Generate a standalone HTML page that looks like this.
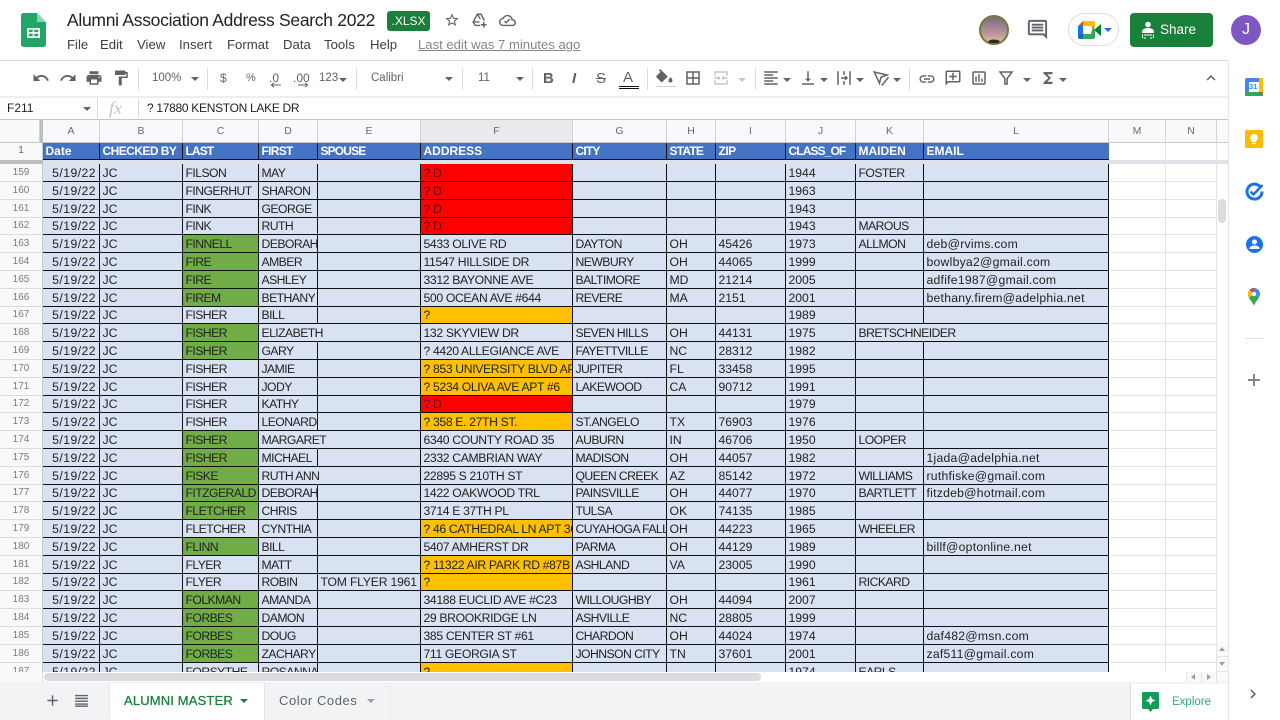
<!DOCTYPE html>
<html><head><meta charset="utf-8"><title>Alumni Association Address Search 2022</title>
<style>
html,body{margin:0;padding:0;width:1280px;height:720px;overflow:hidden;background:#fff;font-family:"Liberation Sans",sans-serif;color:#222}
body{filter:blur(.3px)}
.x{position:absolute;white-space:nowrap}
svg{position:absolute;display:block}
.i{fill:#5f6368}
.k{position:absolute;width:0;height:0;border-left:4px solid transparent;border-right:4px solid transparent;border-top:4px solid #5f6368}
.sp{position:absolute;top:68px;height:22px;width:1px;background:#dadce0}
.m{position:absolute;top:37px;font-size:13.2px;color:#3c4043;line-height:15px}
.t{position:absolute;top:71px;font-size:12px;color:#5f6368;line-height:14px;white-space:nowrap}
#grid{position:absolute;left:0;top:164px;width:1217px;height:508px;overflow:hidden}
table{border-collapse:separate;border-spacing:0;table-layout:fixed;width:1217px;position:absolute;left:0;top:0}
td{box-sizing:border-box;height:18px;padding:0 0 0 2.5px;background:#d9e2f3;border-right:1px solid #111;border-bottom:1px solid #111;font-size:12.2px;line-height:14px;white-space:nowrap;overflow:hidden;color:#222;letter-spacing:-.55px}
tr.s td{height:17px}
td:nth-child(2){letter-spacing:.45px}
td:nth-child(3){letter-spacing:0}
td:nth-child(6){letter-spacing:-.2px}
td:nth-child(7){letter-spacing:-.35px}
td:nth-child(9),td:nth-child(10),td:nth-child(11){letter-spacing:0}
td:nth-child(13){letter-spacing:.25px}
td.h{background:#f8f9fa;border-right:1px solid #c8c8c8;border-bottom:1px solid #dcdcdc;text-align:center;font-size:10px;color:#7b7b7b;padding:0;letter-spacing:0}
td.d{text-align:right;padding:0 3px 0 0}
td.w{background:#fff;border-right:1px solid #e2e3e3;border-bottom:1px solid #e2e3e3;padding:0}
td.g{background:#70ad47}
td.r{background:#f00;color:#600}
td.a{background:#ffc000}
td.o{overflow:visible;border-right-color:transparent}
.c{position:absolute;top:120px;height:23px;box-sizing:border-box;background:#f8f9fa;border-right:1px solid #d4d4d4;text-align:center;font-size:10.5px;line-height:23px;color:#6a6a6a;border-bottom:1px solid #c8c8c8}
.b{position:absolute;top:143px;height:17px;box-sizing:border-box;background:#4472c4;border-right:1px solid #111;border-bottom:1px solid #111;color:#fff;font-weight:bold;font-size:12px;line-height:16px;padding-left:2.5px;white-space:nowrap;overflow:hidden}
.v{position:absolute;width:1px;background:#e2e3e3}
</style></head><body>

<!-- Title area -->
<svg style="left:21px;top:13px" width="25" height="34" viewBox="0 0 25 34"><path d="M2.5 0H16l9 9v22.5a2.5 2.5 0 0 1-2.5 2.5h-20A2.5 2.5 0 0 1 0 31.500v-29A2.500 2.500 0 0 1 2.500 0z" fill="#23a566"/><path d="M16 0l9 9h-9z" fill="#8ed1b1"/><path d="M6 15h13v10H6zm1.800 1.800v2.300h3.900v-2.300zm5.500 0v2.300h3.900v-2.300zm-5.500 3.900v2.500h3.900v-2.500zm5.500 0v2.500h3.900v-2.500z" fill="#fff" fill-rule="evenodd"/></svg>
<div class="x" style="left:67px;top:10px;font-size:17.5px;line-height:21px;color:#202124;letter-spacing:-.29px">Alumni Association Address Search 2022</div>
<div class="x" style="left:387px;top:11px;width:43px;height:20px;background:#188038;border-radius:3px;color:#fff;font-size:12px;line-height:21px;text-align:center">.XLSX</div>
<svg style="left:444px;top:12px" width="16" height="16" viewBox="0 0 24 24"><path class="i" d="M22 9.240l-7.190-.62L12 2 9.190 8.630 2 9.240l5.460 4.730L5.820 21 12 17.270 18.180 21l-1.630-7.030L22 9.240zM12 15.400l-3.760 2.270 1-4.280-3.320-2.880 4.380-.38L12 6.100l1.710 4.040 4.380.38-3.320 2.880 1 4.280L12 15.400z"/></svg>
<svg style="left:471px;top:12px" width="17" height="17" viewBox="0 0 24 24" fill="none" stroke="#5f6368" stroke-width="2"><path d="M9 3h5l5 9M9 3L3 14l3 5h7M9 3l4 7M3 14h9"/><path d="M18 14v8M14 18h8" stroke="#5f6368"/></svg>
<svg style="left:499px;top:12px" width="17" height="17" viewBox="0 0 24 24"><path class="i" d="M19.350 10.040A7.490 7.490 0 0 0 12 4C9.110 4 6.600 5.640 5.350 8.040A5.994 5.994 0 0 0 0 14c0 3.310 2.690 6 6 6h13c2.760 0 5-2.240 5-5 0-2.640-2.050-4.780-4.650-4.960zM19 18H6c-2.210 0-4-1.790-4-4s1.790-4 4-4h.71C7.370 7.690 9.480 6 12 6a5.500 5.500 0 0 1 5.500 5.500v.5H19a3 3 0 0 1 0 6zm-9-1.500l-3-3 1.400-1.400 1.600 1.600 4.600-4.600 1.400 1.400z"/></svg>
<div class="m" style="left:67px">File</div><div class="m" style="left:100px">Edit</div><div class="m" style="left:137px">View</div><div class="m" style="left:179px">Insert</div><div class="m" style="left:227px">Format</div><div class="m" style="left:283px">Data</div><div class="m" style="left:324px">Tools</div><div class="m" style="left:370px">Help</div>
<div class="m" style="left:418px;color:#80868b;text-decoration:underline;font-size:13.1px">Last edit was 7 minutes ago</div>

<!-- Top right -->
<svg style="left:979px;top:15px" width="30" height="30" viewBox="0 0 30 30"><defs><linearGradient id="av" x1="0" y1="0" x2="0" y2="1"><stop offset="0" stop-color="#766a7a"/><stop offset=".55" stop-color="#b08e99"/><stop offset=".9" stop-color="#e5b09a"/></linearGradient></defs><circle cx="15" cy="15" r="14" fill="url(#av)" stroke="#6c7d3c" stroke-width="2"/><path d="M9 26q6-3 12 0l-2 2h-8z" fill="#2b2622"/></svg>
<svg style="left:1026px;top:18px" width="23" height="23" viewBox="0 0 24 24"><path class="i" d="M21.990 4c0-1.100-.89-2-1.990-2H4c-1.100 0-2 .9-2 2v12c0 1.100.9 2 2 2h14l4 4-.01-18zM20 4v13.170L18.830 16H4V4h16zM6 12h12v2H6zm0-3h12v2H6zm0-3h12v2H6z"/></svg>
<div class="x" style="left:1068px;top:13px;width:51px;height:33px;box-sizing:border-box;border:1px solid #dadce0;border-radius:17px"></div>
<svg style="left:1078px;top:21px" width="24" height="18" viewBox="0 0 24 18"><path d="M5 0h10v5H5z" fill="#fbbc04"/><path d="M5 0v5H0z" fill="#ea4335"/><path d="M0 5h5v8H0z" fill="#1a73e8"/><path d="M0 13h5v5H2a2 2 0 0 1-2-2z" fill="#1967d2"/><path d="M5 13h10v5H5z" fill="#34a853"/><path d="M15 0a2 2 0 0 1 2 2v4l-2 3-2-4V3z" fill="#fbbc04"/><path d="M15 5l2 4v7a2 2 0 0 1-2 2v-5h-2z" fill="#34a853"/><path d="M16 9l7-6v12z" fill="#00832d"/></svg>
<div class="k" style="left:1104px;top:28px;border-top-color:#1a73e8"></div>
<div class="x" style="left:1130px;top:13px;width:83px;height:34px;background:#188038;border-radius:4px"></div>
<svg style="left:1140px;top:21px" width="16" height="18" viewBox="0 0 16 18"><circle cx="8" cy="3.500" r="2.800" fill="#fff"/><path d="M2 11c0-3 3-4 6-4s6 1 6 4v1H2z" fill="#fff"/><path d="M4 14h8M3 16.500a2 2 0 0 1 0-3M6 17H3.500M10 17h2.500M13 13.500a2 2 0 0 1 0 3" stroke="#fff" fill="none" stroke-width="1"/></svg>
<div class="x" style="left:1160px;top:22px;color:#fff;font-size:13.500px;line-height:16px">Share</div>
<div class="x" style="left:1231px;top:15px;width:30px;height:30px;border-radius:50%;background:#7e57c2;color:#fff;font-size:16px;line-height:30px;text-align:center">J</div>

<!-- Toolbar -->
<div class="x" style="left:0;top:60px;width:1228px;height:1px;background:#dadce0"></div>
<div class="x" style="left:0;top:96px;width:1228px;height:2px;background:#eceef0"></div>
<svg style="left:32px;top:69px" width="18" height="18" viewBox="0 0 24 24"><path class="i" d="M12.500 8c-2.650 0-5.050.99-6.900 2.600L2 7v9h9l-3.620-3.620c1.390-1.160 3.160-1.880 5.120-1.880 3.540 0 6.550 2.310 7.600 5.500l2.370-.78C21.080 11.030 17.150 8 12.500 8z"/></svg>
<svg style="left:59px;top:69px" width="18" height="18" viewBox="0 0 24 24"><path class="i" d="M18.400 10.600C16.550 8.990 14.150 8 11.500 8c-4.650 0-8.580 3.030-9.960 7.220L3.900 16c1.050-3.190 4.050-5.500 7.600-5.500 1.950 0 3.730.72 5.120 1.880L13 16h9V7l-3.600 3.600z"/></svg>
<svg style="left:85px;top:69px" width="18" height="18" viewBox="0 0 24 24"><path class="i" d="M19 8H5c-1.660 0-3 1.340-3 3v6h4v4h12v-4h4v-6c0-1.660-1.340-3-3-3zm-3 11H8v-5h8v5zm3-7c-.55 0-1-.45-1-1s.45-1 1-1 1 .45 1 1-.45 1-1 1zm-1-9H6v4h12V3z"/></svg>
<svg style="left:112px;top:69px" width="18" height="18" viewBox="0 0 24 24"><path class="i" d="M18 4V3c0-.55-.45-1-1-1H5c-.55 0-1 .45-1 1v4c0 .55.45 1 1 1h12c.55 0 1-.45 1-1V6h1v4H9v11c0 .55.45 1 1 1h2c.55 0 1-.45 1-1v-9h8V4h-3z"/></svg>
<div class="sp" style="left:138px"></div>
<div class="t" style="left:152px;font-size:11.500px">100%</div><div class="k" style="left:191px;top:77px"></div>
<div class="sp" style="left:207px"></div>
<div class="t" style="left:220px">$</div><div class="t" style="left:246px;font-size:11px">%</div>
<div class="t" style="left:269px">.0</div><div class="t" style="left:293px">.00</div>
<svg style="left:268px;top:82px" width="44" height="6" viewBox="0 0 44 6" fill="none" stroke="#5f6368" stroke-width="1"><path d="M13 3H4M6 .800L3.500 3 6 5.200M30 3h9M37 .800L39.500 3 37 5.200"/></svg>
<div class="t" style="left:319px;font-size:11.500px">123</div><div class="k" style="left:339px;top:78px"></div>
<div class="sp" style="left:356px"></div>
<div class="t" style="left:371px;font-size:11.500px">Calibri</div><div class="k" style="left:445px;top:77px"></div>
<div class="sp" style="left:462px"></div>
<div class="t" style="left:478px;font-size:11.500px">11</div><div class="k" style="left:516px;top:77px"></div>
<div class="sp" style="left:532px"></div>
<div class="t" style="left:543px;top:70px;font-size:15px;line-height:18px;font-weight:bold">B</div>
<div class="t" style="left:572px;top:70px;font-size:15px;line-height:18px;font-weight:bold;font-style:italic">I</div>
<div class="t" style="left:596px;top:70px;font-size:15px;line-height:18px;text-decoration:line-through">S</div>
<div class="t" style="left:623px;top:69px;font-size:15px;line-height:17px">A</div>
<div class="x" style="left:619px;top:86px;width:20px;height:1px;background:#111"></div><div class="x" style="left:619px;top:88px;width:20px;height:1px;background:#111"></div>
<div class="sp" style="left:647px"></div>
<svg style="left:656px;top:69px" width="18" height="15" viewBox="0 0 18 15"><path class="i" d="M4 0L2.800 1.200l1.700 1.700L.6 6.800c-.5.500-.5 1.200 0 1.700l4.300 4.300c.5.500 1.200.5 1.700 0L11.800 7.500z"/><path class="i" d="M14.500 8s-2 2.200-2 3.500a2 2 0 0 0 4 0C16.500 10.200 14.500 8 14.500 8z"/></svg>
<div class="x" style="left:656px;top:86px;width:20px;height:1px;background:#c6d4ea"></div>
<svg style="left:684px;top:69px" width="18" height="18" viewBox="0 0 24 24"><path class="i" d="M3 3v18h18V3H3zm8 16H5v-6h6v6zm0-8H5V5h6v6zm8 8h-6v-6h6v6zm0-8h-6V5h6v6z"/></svg>
<svg style="left:712px;top:69px" width="18" height="18" viewBox="0 0 24 24" fill="none" stroke="#c4c6c9" stroke-width="2"><path d="M4 9V4h16v5M4 15v5h16v-5M3 12h7M14 12h7M8 10l2 2-2 2M16 10l-2 2 2 2"/></svg>
<div class="k" style="left:738px;top:78px;border-top-color:#c4c6c9"></div>
<div class="sp" style="left:755px"></div>
<svg style="left:762px;top:69px" width="18" height="18" viewBox="0 0 24 24"><path class="i" d="M15 15H3v2h12v-2zm0-8H3v2h12V7zM3 13h18v-2H3v2zm0 8h18v-2H3v2zM3 3v2h18V3H3z"/></svg>
<div class="k" style="left:783px;top:78px"></div>
<svg style="left:799px;top:69px" width="18" height="18" viewBox="0 0 24 24"><path class="i" d="M16 13h-3V3h-2v10H8l4 4 4-4zM4 19v2h16v-2H4z"/></svg>
<div class="k" style="left:820px;top:78px"></div>
<svg style="left:835px;top:69px" width="18" height="18" viewBox="0 0 24 24" fill="none" stroke="#5f6368" stroke-width="2"><path d="M4 3v18M20 3v18M12 3v5M12 16v5M8 12h8M13.500 9.500L16 12l-2.500 2.500"/></svg>
<div class="k" style="left:856px;top:78px"></div>
<svg style="left:872px;top:69px" width="18" height="18" viewBox="0 0 24 24" fill="none" stroke="#5f6368" stroke-width="2"><path d="M3 4l17 4-8 3-2 8zM13 22l9-11"/></svg>
<div class="k" style="left:893px;top:78px"></div>
<div class="sp" style="left:909px"></div>
<svg style="left:918px;top:70px" width="18" height="18" viewBox="0 0 24 24"><path class="i" d="M3.900 12c0-1.710 1.390-3.100 3.100-3.100h4V7H7c-2.760 0-5 2.240-5 5s2.240 5 5 5h4v-1.900H7c-1.710 0-3.100-1.390-3.100-3.100zM8 13h8v-2H8v2zm9-6h-4v1.900h4c1.710 0 3.100 1.390 3.100 3.100s-1.390 3.100-3.100 3.100h-4V17h4c2.760 0 5-2.240 5-5s-2.240-5-5-5z"/></svg>
<svg style="left:944px;top:69px" width="18" height="18" viewBox="0 0 24 24"><path class="i" d="M20 2H4c-1.100 0-2 .9-2 2v18l4-4h14c1.100 0 2-.9 2-2V4c0-1.100-.9-2-2-2zm0 14H5.170L4 17.170V4h16v12zM13 5h-2v4H7v2h4v4h2v-4h4V9h-4z"/></svg>
<svg style="left:970px;top:69px" width="18" height="18" viewBox="0 0 24 24"><path class="i" d="M19 3H5c-1.100 0-2 .9-2 2v14c0 1.100.9 2 2 2h14c1.100 0 2-.9 2-2V5c0-1.100-.9-2-2-2zm0 16H5V5h14v14zM7 10h2v7H7zm4-3h2v10h-2zm4 6h2v4h-2z"/></svg>
<svg style="left:997px;top:69px" width="18" height="18" viewBox="0 0 24 24" fill="none" stroke="#5f6368" stroke-width="2"><path d="M4 4h16l-6.500 8.500V20h-3v-7.500z"/></svg>
<div class="k" style="left:1023px;top:78px"></div>
<svg style="left:1039px;top:69px" width="18" height="18" viewBox="0 0 24 24"><path class="i" d="M18 4H6v2l6.500 6L6 18v2h12v-3h-7l5-5-5-5h7z"/></svg>
<div class="k" style="left:1059px;top:78px"></div>
<svg style="left:1202px;top:69px" width="18" height="18" viewBox="0 0 24 24"><path class="i" d="M12 8l-6 6 1.410 1.410L12 10.830l4.590 4.580L18 14z"/></svg>

<!-- Formula bar -->
<div class="x" style="left:7px;top:101px;font-size:12px;line-height:14px;color:#222">F211</div>
<div class="k" style="left:83px;top:107px"></div>
<div class="x" style="left:97px;top:98px;width:1px;height:20px;background:#dadce0"></div>
<div class="x" style="left:109px;top:98px;font-family:'Liberation Serif',serif;font-style:italic;font-size:18px;line-height:20px;color:#c4c6c9">fx</div>
<div class="x" style="left:138px;top:98px;width:1px;height:20px;background:#dadce0"></div>
<div class="x" style="left:147px;top:101px;font-size:12px;line-height:14px;color:#222;letter-spacing:-.3px">? 17880 KENSTON LAKE DR</div>
<div class="x" style="left:0;top:119px;width:1228px;height:1px;background:#c4c7c5"></div>

<!-- Column headers -->
<div class="c" style="left:0;width:40px;background:#f8f9fa"></div>
<div class="x" style="left:40px;top:120px;width:3px;height:23px;background:#bdbdbd"></div>
<div class="c" style="left:43px;width:57px">A</div><div class="c" style="left:100px;width:83px">B</div><div class="c" style="left:183px;width:76px">C</div><div class="c" style="left:259px;width:59px">D</div><div class="c" style="left:318px;width:103px">E</div>
<div class="c" style="left:421px;width:152px;background:#e8eaed">F</div>
<div class="c" style="left:573px;width:94px">G</div><div class="c" style="left:667px;width:49px">H</div><div class="c" style="left:716px;width:70px">I</div><div class="c" style="left:786px;width:70px">J</div><div class="c" style="left:856px;width:68px">K</div><div class="c" style="left:924px;width:185px">L</div><div class="c" style="left:1109px;width:57px">M</div><div class="c" style="left:1166px;width:51px">N</div>
<div class="c" style="left:1217px;width:11px;border-right:0"></div>

<!-- Frozen row 1 -->
<div class="x" style="left:0;top:143px;width:43px;height:17px;box-sizing:border-box;background:#f8f9fa;border-right:1px solid #c8c8c8;text-align:center;font-size:10px;line-height:16px;color:#666">1</div>
<div class="b" style="left:43px;width:57px">Date</div><div class="b" style="left:100px;width:83px;letter-spacing:-.55px">CHECKED BY</div><div class="b" style="left:183px;width:76px;letter-spacing:-.9px">LAST</div><div class="b" style="left:259px;width:59px;letter-spacing:-.7px">FIRST</div><div class="b" style="left:318px;width:103px;letter-spacing:-.85px">SPOUSE</div><div class="b" style="left:421px;width:152px">ADDRESS</div><div class="b" style="left:573px;width:94px;letter-spacing:-.8px">CITY</div><div class="b" style="left:667px;width:49px;letter-spacing:-.8px">STATE</div><div class="b" style="left:716px;width:70px;letter-spacing:-.5px">ZIP</div><div class="b" style="left:786px;width:70px;letter-spacing:-.9px">CLASS_OF</div><div class="b" style="left:856px;width:68px">MAIDEN</div><div class="b" style="left:924px;width:185px;border-right:0">EMAIL</div>
<div class="v" style="left:1165px;top:143px;height:17px"></div><div class="v" style="left:1216px;top:143px;height:17px"></div>
<div class="x" style="left:0;top:160px;width:43px;height:4px;background:#bdbdbd"></div>
<div class="x" style="left:43px;top:160px;width:1185px;height:4px;background:#dfe2e9"></div>

<!-- Grid -->
<div id="grid"><table>
<colgroup><col style="width:43px"><col style="width:57px"><col style="width:83px"><col style="width:76px"><col style="width:59px"><col style="width:103px"><col style="width:152px"><col style="width:94px"><col style="width:49px"><col style="width:70px"><col style="width:70px"><col style="width:68px"><col style="width:185px"><col style="width:57px"><col style="width:51px"></colgroup>
<tr><td class="h">159</td><td class="d">5/19/22</td><td>JC</td><td>FILSON</td><td>MAY</td><td></td><td class="r">? D</td><td></td><td></td><td></td><td>1944</td><td>FOSTER</td><td></td><td class="w"></td><td class="w"></td></tr>
<tr><td class="h">160</td><td class="d">5/19/22</td><td>JC</td><td>FINGERHUT</td><td>SHARON</td><td></td><td class="r">? D</td><td></td><td></td><td></td><td>1963</td><td></td><td></td><td class="w"></td><td class="w"></td></tr>
<tr><td class="h">161</td><td class="d">5/19/22</td><td>JC</td><td>FINK</td><td>GEORGE</td><td></td><td class="r">? D</td><td></td><td></td><td></td><td>1943</td><td></td><td></td><td class="w"></td><td class="w"></td></tr>
<tr class="s"><td class="h">162</td><td class="d">5/19/22</td><td>JC</td><td>FINK</td><td>RUTH</td><td></td><td class="r">? D</td><td></td><td></td><td></td><td>1943</td><td>MAROUS</td><td></td><td class="w"></td><td class="w"></td></tr>
<tr><td class="h">163</td><td class="d">5/19/22</td><td>JC</td><td class="g">FINNELL</td><td>DEBORAH</td><td></td><td>5433 OLIVE RD</td><td>DAYTON</td><td>OH</td><td>45426</td><td>1973</td><td>ALLMON</td><td>deb@rvims.com</td><td class="w"></td><td class="w"></td></tr>
<tr><td class="h">164</td><td class="d">5/19/22</td><td>JC</td><td class="g">FIRE</td><td>AMBER</td><td></td><td>11547 HILLSIDE DR</td><td>NEWBURY</td><td>OH</td><td>44065</td><td>1999</td><td></td><td>bowlbya2@gmail.com</td><td class="w"></td><td class="w"></td></tr>
<tr><td class="h">165</td><td class="d">5/19/22</td><td>JC</td><td class="g">FIRE</td><td>ASHLEY</td><td></td><td>3312 BAYONNE AVE</td><td>BALTIMORE</td><td>MD</td><td>21214</td><td>2005</td><td></td><td>adfife1987@gmail.com</td><td class="w"></td><td class="w"></td></tr>
<tr><td class="h">166</td><td class="d">5/19/22</td><td>JC</td><td class="g">FIREM</td><td>BETHANY</td><td></td><td>500 OCEAN AVE #644</td><td>REVERE</td><td>MA</td><td>2151</td><td>2001</td><td></td><td>bethany.firem@adelphia.net</td><td class="w"></td><td class="w"></td></tr>
<tr class="s"><td class="h">167</td><td class="d">5/19/22</td><td>JC</td><td>FISHER</td><td>BILL</td><td></td><td class="a">?</td><td></td><td></td><td></td><td>1989</td><td></td><td></td><td class="w"></td><td class="w"></td></tr>
<tr><td class="h">168</td><td class="d">5/19/22</td><td>JC</td><td class="g">FISHER</td><td class="o">ELIZABETH</td><td></td><td>132 SKYVIEW DR</td><td>SEVEN HILLS</td><td>OH</td><td>44131</td><td>1975</td><td class="o">BRETSCHNEIDER</td><td></td><td class="w"></td><td class="w"></td></tr>
<tr><td class="h">169</td><td class="d">5/19/22</td><td>JC</td><td class="g">FISHER</td><td>GARY</td><td></td><td>? 4420 ALLEGIANCE AVE</td><td>FAYETTVILLE</td><td>NC</td><td>28312</td><td>1982</td><td></td><td></td><td class="w"></td><td class="w"></td></tr>
<tr><td class="h">170</td><td class="d">5/19/22</td><td>JC</td><td>FISHER</td><td>JAMIE</td><td></td><td class="a">? 853 UNIVERSITY BLVD APT 4</td><td>JUPITER</td><td>FL</td><td>33458</td><td>1995</td><td></td><td></td><td class="w"></td><td class="w"></td></tr>
<tr><td class="h">171</td><td class="d">5/19/22</td><td>JC</td><td>FISHER</td><td>JODY</td><td></td><td class="a">? 5234 OLIVA AVE APT #6</td><td>LAKEWOOD</td><td>CA</td><td>90712</td><td>1991</td><td></td><td></td><td class="w"></td><td class="w"></td></tr>
<tr class="s"><td class="h">172</td><td class="d">5/19/22</td><td>JC</td><td>FISHER</td><td>KATHY</td><td></td><td class="r">? D</td><td></td><td></td><td></td><td>1979</td><td></td><td></td><td class="w"></td><td class="w"></td></tr>
<tr><td class="h">173</td><td class="d">5/19/22</td><td>JC</td><td>FISHER</td><td>LEONARD</td><td></td><td class="a">? 358 E. 27TH ST.</td><td>ST.ANGELO</td><td>TX</td><td>76903</td><td>1976</td><td></td><td></td><td class="w"></td><td class="w"></td></tr>
<tr><td class="h">174</td><td class="d">5/19/22</td><td>JC</td><td class="g">FISHER</td><td class="o">MARGARET</td><td></td><td>6340 COUNTY ROAD 35</td><td>AUBURN</td><td>IN</td><td>46706</td><td>1950</td><td>LOOPER</td><td></td><td class="w"></td><td class="w"></td></tr>
<tr><td class="h">175</td><td class="d">5/19/22</td><td>JC</td><td class="g">FISHER</td><td>MICHAEL</td><td></td><td>2332 CAMBRIAN WAY</td><td>MADISON</td><td>OH</td><td>44057</td><td>1982</td><td></td><td>1jada@adelphia.net</td><td class="w"></td><td class="w"></td></tr>
<tr><td class="h">176</td><td class="d">5/19/22</td><td>JC</td><td class="g">FISKE</td><td class="o">RUTH ANN</td><td></td><td>22895 S 210TH ST</td><td>QUEEN CREEK</td><td>AZ</td><td>85142</td><td>1972</td><td>WILLIAMS</td><td>ruthfiske@gmail.com</td><td class="w"></td><td class="w"></td></tr>
<tr class="s"><td class="h">177</td><td class="d">5/19/22</td><td>JC</td><td class="g">FITZGERALD</td><td>DEBORAH</td><td></td><td>1422 OAKWOOD TRL</td><td>PAINSVILLE</td><td>OH</td><td>44077</td><td>1970</td><td>BARTLETT</td><td>fitzdeb@hotmail.com</td><td class="w"></td><td class="w"></td></tr>
<tr><td class="h">178</td><td class="d">5/19/22</td><td>JC</td><td class="g">FLETCHER</td><td>CHRIS</td><td></td><td>3714 E 37TH PL</td><td>TULSA</td><td>OK</td><td>74135</td><td>1985</td><td></td><td></td><td class="w"></td><td class="w"></td></tr>
<tr><td class="h">179</td><td class="d">5/19/22</td><td>JC</td><td>FLETCHER</td><td>CYNTHIA</td><td></td><td class="a">? 46 CATHEDRAL LN APT 306</td><td>CUYAHOGA FALLS</td><td>OH</td><td>44223</td><td>1965</td><td>WHEELER</td><td></td><td class="w"></td><td class="w"></td></tr>
<tr><td class="h">180</td><td class="d">5/19/22</td><td>JC</td><td class="g">FLINN</td><td>BILL</td><td></td><td>5407 AMHERST DR</td><td>PARMA</td><td>OH</td><td>44129</td><td>1989</td><td></td><td>billf@optonline.net</td><td class="w"></td><td class="w"></td></tr>
<tr><td class="h">181</td><td class="d">5/19/22</td><td>JC</td><td>FLYER</td><td>MATT</td><td></td><td class="a">? 11322 AIR PARK RD #87B</td><td>ASHLAND</td><td>VA</td><td>23005</td><td>1990</td><td></td><td></td><td class="w"></td><td class="w"></td></tr>
<tr class="s"><td class="h">182</td><td class="d">5/19/22</td><td>JC</td><td>FLYER</td><td>ROBIN</td><td>TOM FLYER 1961</td><td class="a">?</td><td></td><td></td><td></td><td>1961</td><td>RICKARD</td><td></td><td class="w"></td><td class="w"></td></tr>
<tr><td class="h">183</td><td class="d">5/19/22</td><td>JC</td><td class="g">FOLKMAN</td><td>AMANDA</td><td></td><td>34188 EUCLID AVE #C23</td><td>WILLOUGHBY</td><td>OH</td><td>44094</td><td>2007</td><td></td><td></td><td class="w"></td><td class="w"></td></tr>
<tr><td class="h">184</td><td class="d">5/19/22</td><td>JC</td><td class="g">FORBES</td><td>DAMON</td><td></td><td>29 BROOKRIDGE LN</td><td>ASHVILLE</td><td>NC</td><td>28805</td><td>1999</td><td></td><td></td><td class="w"></td><td class="w"></td></tr>
<tr><td class="h">185</td><td class="d">5/19/22</td><td>JC</td><td class="g">FORBES</td><td>DOUG</td><td></td><td>385 CENTER ST #61</td><td>CHARDON</td><td>OH</td><td>44024</td><td>1974</td><td></td><td>daf482@msn.com</td><td class="w"></td><td class="w"></td></tr>
<tr><td class="h">186</td><td class="d">5/19/22</td><td>JC</td><td class="g">FORBES</td><td>ZACHARY</td><td></td><td>711 GEORGIA ST</td><td>JOHNSON CITY</td><td>TN</td><td>37601</td><td>2001</td><td></td><td>zaf511@gmail.com</td><td class="w"></td><td class="w"></td></tr>
<tr><td class="h">187</td><td class="d">5/19/22</td><td>JC</td><td>FORSYTHE</td><td>ROSANNA</td><td></td><td class="a">?</td><td></td><td></td><td></td><td>1974</td><td>EARLS</td><td></td><td class="w"></td><td class="w"></td></tr>
</table></div>

<!-- Vertical scrollbar -->
<div class="x" style="left:1217px;top:164px;width:11px;height:518px;background:#fff"></div>
<div class="x" style="left:1218px;top:199px;width:8px;height:24px;border-radius:4px;background:#dadce0"></div>
<div class="x" style="left:1217px;top:642px;width:11px;height:15px;background:#f8f9fa;border-bottom:1px solid #e2e3e3;box-sizing:border-box"></div>
<div class="x" style="left:1217px;top:657px;width:11px;height:15px;background:#f8f9fa;border-bottom:1px solid #e2e3e3;box-sizing:border-box"></div>
<div class="x" style="left:1219px;top:647px;border-left:3.500px solid transparent;border-right:3.500px solid transparent;border-bottom:4px solid #9aa0a6"></div>
<div class="x" style="left:1219px;top:662px;border-left:3.500px solid transparent;border-right:3.500px solid transparent;border-top:4px solid #9aa0a6"></div>

<!-- Horizontal scrollbar -->
<div class="x" style="left:0;top:672px;width:1228px;height:10px;background:#fff"></div>
<div class="x" style="left:0;top:672px;width:43px;height:10px;background:#f8f9fa;border-right:1px solid #e2e3e3;box-sizing:border-box"></div>
<div class="x" style="left:44px;top:673px;width:717px;height:8px;border-radius:4px;background:#dadce0"></div>
<div class="x" style="left:1186px;top:672px;width:30px;height:10px;background:#f8f9fa;box-sizing:border-box;border-left:1px solid #e2e3e3"></div>
<div class="x" style="left:1201px;top:672px;width:1px;height:10px;background:#e2e3e3"></div>
<div class="x" style="left:1216px;top:672px;width:12px;height:10px;background:#f8f9fa;border-left:1px solid #e2e3e3;box-sizing:border-box"></div>
<div class="x" style="left:1191px;top:674px;border-top:3.500px solid transparent;border-bottom:3.500px solid transparent;border-right:4px solid #9aa0a6"></div>
<div class="x" style="left:1207px;top:674px;border-top:3.500px solid transparent;border-bottom:3.500px solid transparent;border-left:4px solid #9aa0a6"></div>

<!-- Tab bar -->
<div class="x" style="left:0;top:682px;width:1228px;height:38px;background:#f1f3f4"></div>
<svg style="left:45px;top:693px" width="15" height="15" viewBox="0 0 24 24"><path class="i" d="M19 13h-6v6h-2v-6H5v-2h6V5h2v6h6z" transform="translate(-2 -2) scale(1.170)"/></svg>
<svg style="left:73px;top:692px" width="17" height="17" viewBox="0 0 24 24"><path class="i" d="M3 4h18v2H3zm0 4h18v2H3zm0 4h18v2H3zm0 4h18v2H3zm0 3h18v2H3z"/></svg>
<div class="x" style="left:110px;top:683px;width:154px;height:37px;background:#fff;box-shadow:0 0 1px #c8c8c8"></div>
<div class="x" style="left:124px;top:693px;font-size:13px;line-height:15px;font-weight:500;color:#188038;letter-spacing:.15px;-webkit-text-stroke:.25px #188038">ALUMNI MASTER</div>
<div class="k" style="left:240px;top:699px;border-top-color:#188038"></div>
<div class="x" style="left:279px;top:693px;font-size:13px;line-height:15px;color:#5f6368;letter-spacing:.55px">Color Codes</div>
<div class="k" style="left:367px;top:699px;border-top-color:#9aa0a6"></div>
<div class="x" style="left:264px;top:683px;width:1px;height:37px;background:#e2e3e3"></div>
<div class="x" style="left:390px;top:683px;width:1px;height:37px;background:#e8eaed"></div>
<div class="x" style="left:1130px;top:684px;width:98px;height:36px;background:#fff;border-left:1px solid #dadce0;box-sizing:border-box"></div>
<svg style="left:1142px;top:692px" width="17" height="20" viewBox="0 0 17 20"><path d="M1.500 0h14A1.500 1.500 0 0 1 17 1.500v14a1.500 1.500 0 0 1-1.500 1.500H11l-2.500 3L6 17H1.500A1.500 1.500 0 0 1 0 15.500v-14A1.500 1.500 0 0 1 1.500 0z" fill="#0f9d58"/><path d="M8.500 3.500l1.500 3.500 3.500 1.500-3.500 1.500-1.500 3.500-1.500-3.500-3.500-1.500 3.500-1.500z" fill="#fff"/></svg>
<div class="x" style="left:1172px;top:695px;font-size:11.5px;line-height:14px;color:#34a873">Explore</div>

<!-- Right side panel -->
<div class="x" style="left:1228px;top:61px;width:1px;height:659px;background:#e4e5e7"></div>
<svg style="left:1245px;top:78px" width="18" height="18" viewBox="0 0 18 18"><rect width="18" height="18" rx="2" fill="#4285f4"/><rect x="0" y="14" width="18" height="4" fill="#34a853"/><rect x="14" y="0" width="4" height="14" fill="#fbbc04"/><path d="M14 14h4l-4 4z" fill="#ea4335"/><rect x="4" y="4" width="10" height="10" fill="#fff"/></svg>
<div class="x" style="left:1249px;top:82px;font-size:7.500px;line-height:9px;color:#4285f4;font-weight:bold">31</div>
<svg style="left:1245px;top:130px" width="18" height="18" viewBox="0 0 18 18"><rect width="18" height="18" rx="1.500" fill="#fbbc04"/><path d="M9 4a3.800 3.800 0 0 1 2.200 6.900V12H6.800v-1.100A3.800 3.800 0 0 1 9 4z" fill="#fff"/><rect x="7" y="12.800" width="4" height="1.300" fill="#fff"/></svg>
<svg style="left:1245px;top:182px" width="19" height="19" viewBox="0 0 19 19" fill="none"><path d="M15 4.500A7.500 7.500 0 1 0 17 9.500" stroke="#1a73e8" stroke-width="3"/><path d="M5.500 9.500L8.500 12.500 17.500 3" stroke="#1a73e8" stroke-width="2.500"/></svg>
<svg style="left:1246px;top:236px" width="17" height="17" viewBox="0 0 17 17"><circle cx="8.500" cy="8.500" r="8.500" fill="#1a73e8"/><circle cx="8.500" cy="6" r="2.500" fill="#fff"/><path d="M3.500 12.500c0-2 2.500-3 5-3s5 1 5 3v.5h-10z" fill="#fff"/></svg>
<svg style="left:1248px;top:288px" width="12" height="18" viewBox="0 0 12 18"><path d="M6 18C5 14 0 11 0 6a6 6 0 0 1 10-4.400L6 6z" fill="#34a853"/><path d="M1.700 1.700A6 6 0 0 0 0 6c0 1.300.4 2.400 1 3.500L6 6z" fill="#fbbc04"/><path d="M1.700 1.700A6 6 0 0 1 6 0v6z" fill="#ea4335"/><path d="M6 0a6 6 0 0 1 6 6c0 1.300-.4 2.400-1 3.500L6 6z" fill="#4285f4"/><path d="M11 9.500C9.700 12 7 14.500 6 18V6z" fill="#34a853"/><circle cx="6" cy="6" r="2.200" fill="#fff"/></svg>
<div class="x" style="left:1245px;top:338px;width:19px;height:1px;background:#e0e0e0"></div>
<svg style="left:1247px;top:373px" width="14" height="14" viewBox="0 0 14 14"><path d="M6 1h2v5h5v2H8v5H6V8H1V6h5z" fill="#80868b"/></svg>
<svg style="left:1244px;top:685px" width="18" height="18" viewBox="0 0 24 24"><path class="i" d="M10 6L8.590 7.410 13.170 12l-4.580 4.590L10 18l6-6z"/></svg>
</body></html>
